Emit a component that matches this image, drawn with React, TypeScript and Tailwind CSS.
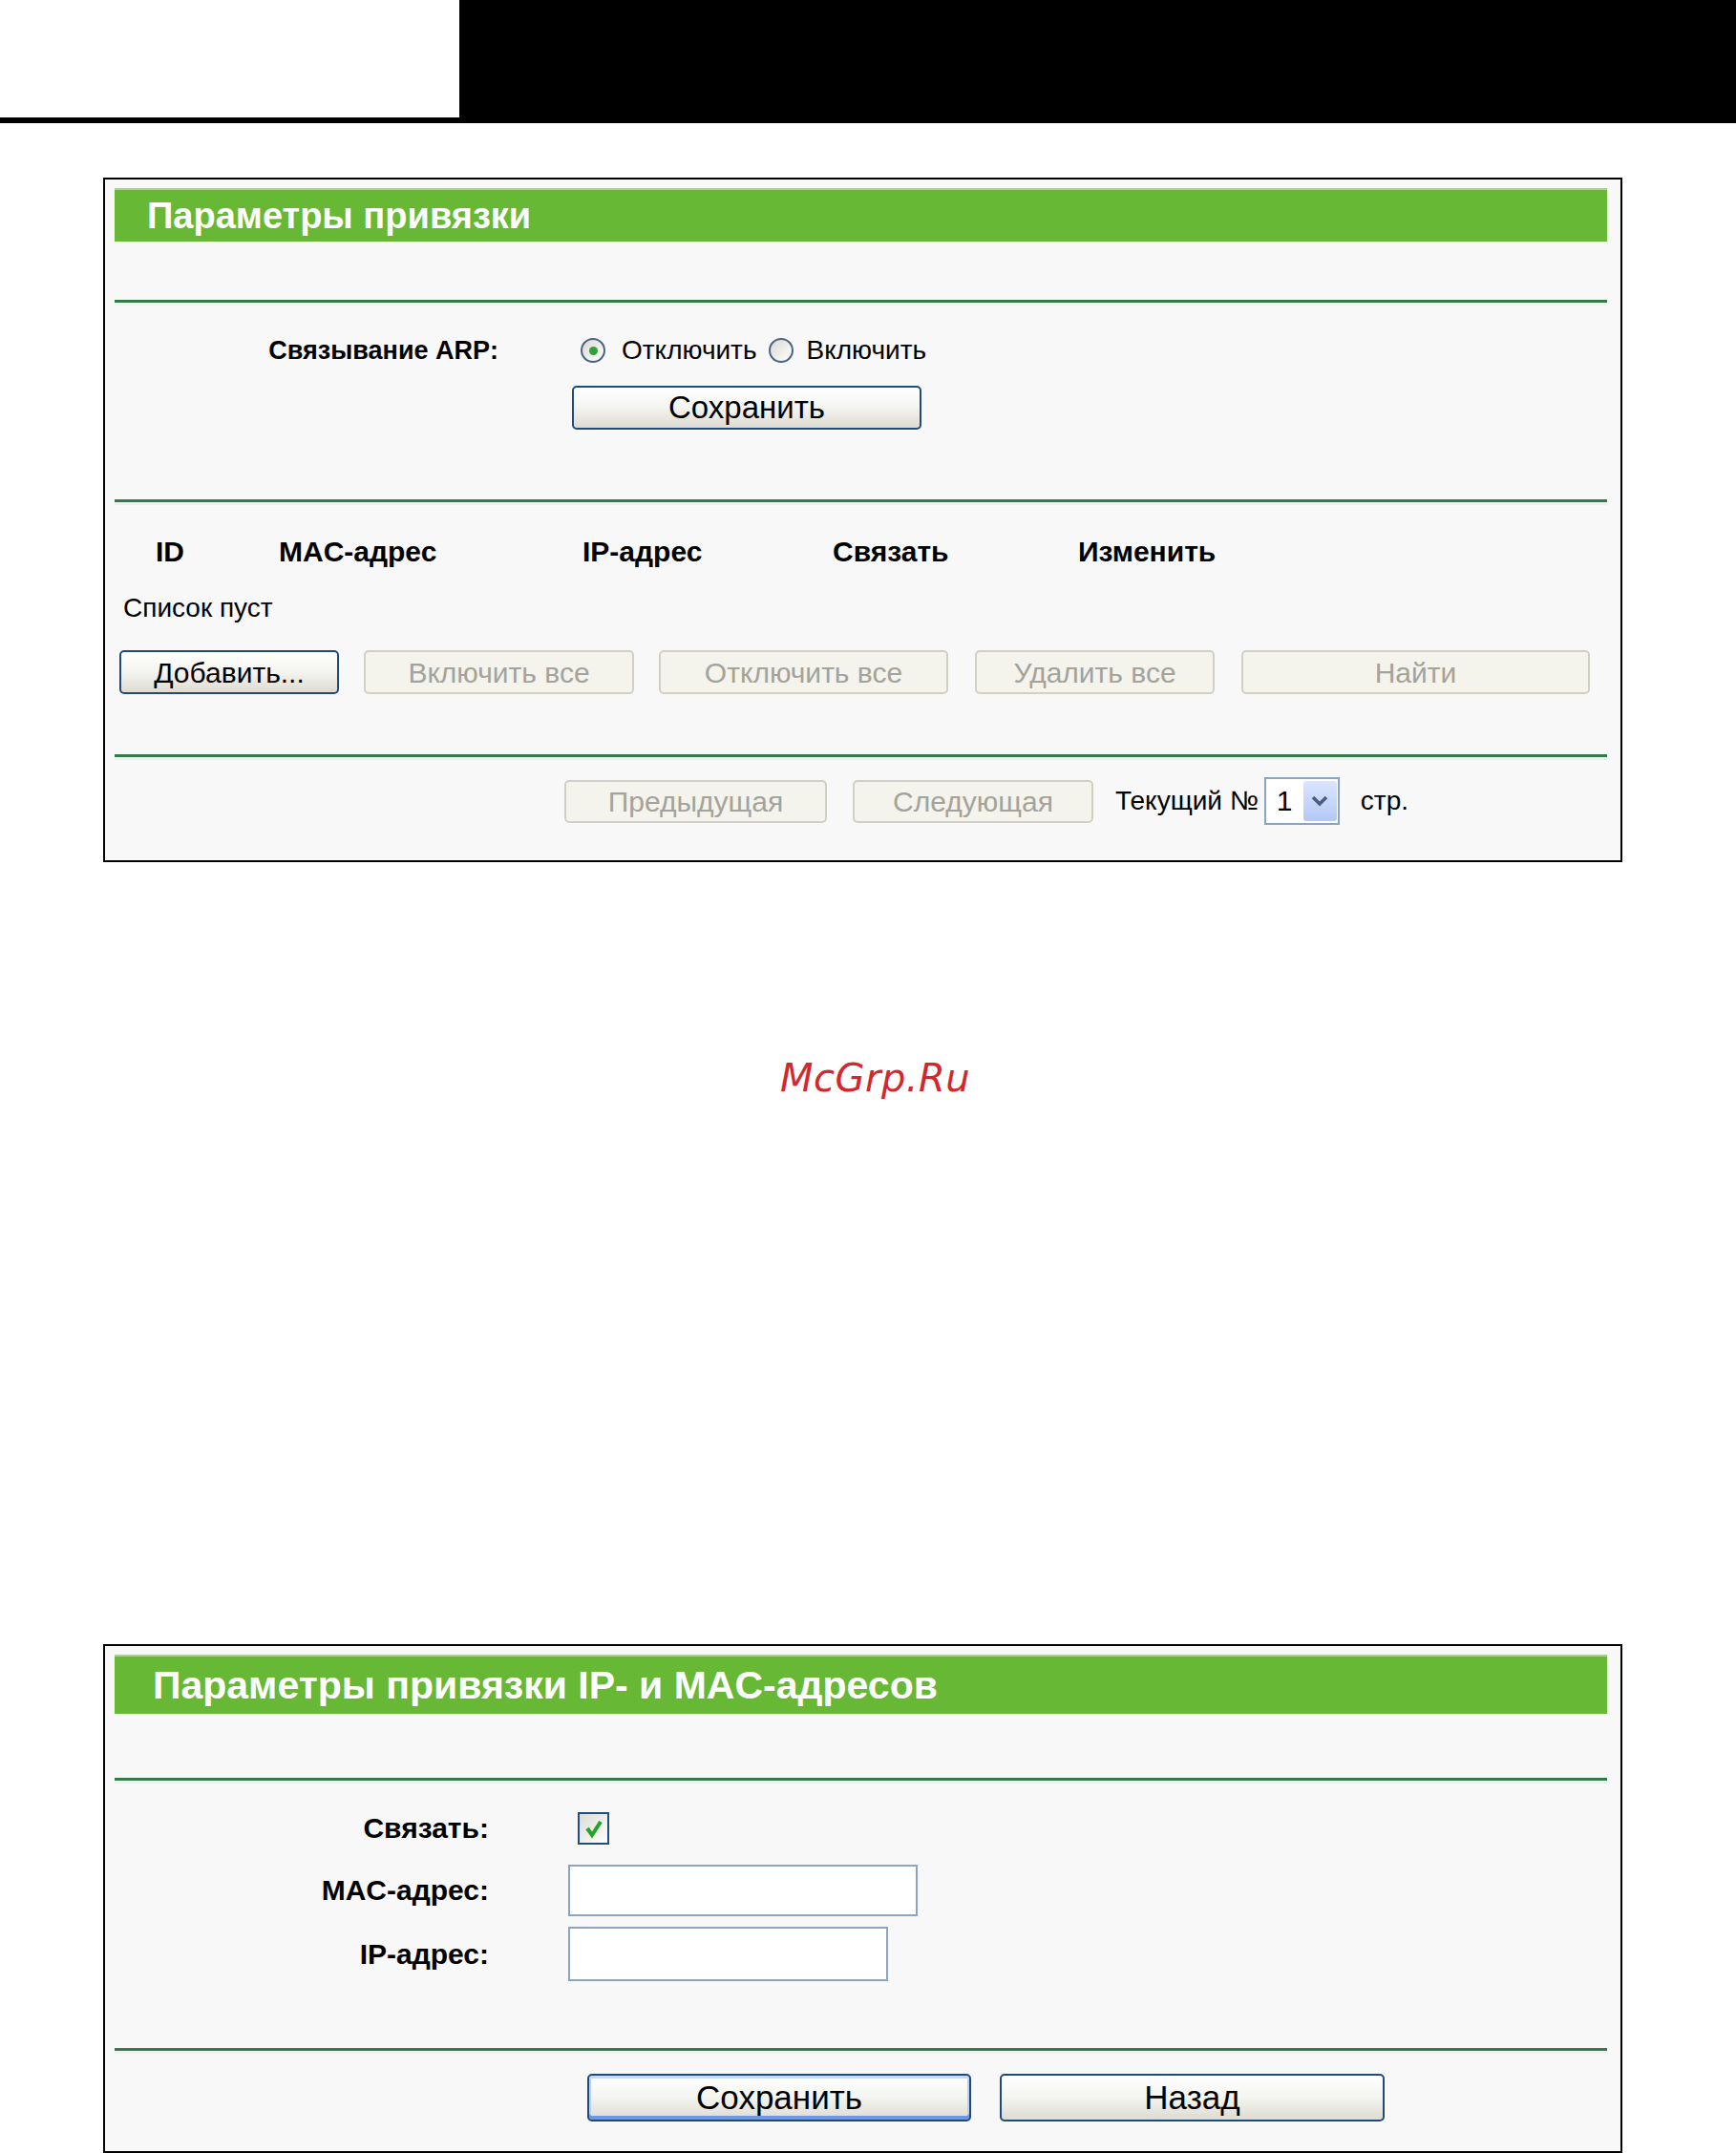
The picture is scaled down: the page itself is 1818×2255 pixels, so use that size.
import React from "react";

const Line = ({ mt }: { mt: string }) => (
  <div className={`${mt} h-[6px] w-full flex flex-col`}>
    <div className="h-[3px] w-full bg-[#33794a]" />
    <div className="h-[3px] w-full bg-[#eef2ee]" />
  </div>
);

const XPButton = ({
  children,
  className,
  focused,
}: {
  children: React.ReactNode;
  className: string;
  focused?: boolean;
}) => (
  <div
    className={`${className} box-border rounded-[5px] border-2 border-[#1f4b7c] flex items-center justify-center text-black bg-gradient-to-b from-[#ffffff] via-[#f4f4f0] to-[#dedbd0] ${
      focused ? "shadow-[inset_0_3px_0_#c6d9fa,inset_0_-4px_0_#6f97e2,inset_2px_0_0_#b9cff6,inset_-2px_0_0_#b9cff6]" : ""
    }`}
  >
    {children}
  </div>
);

const DisButton = ({ children, className }: { children: React.ReactNode; className: string }) => (
  <div
    className={`${className} box-border rounded-[5px] border-2 border-[#d2d0c4] bg-[#f4f3ec] flex items-center justify-center text-[#a3a39b]`}
  >
    {children}
  </div>
);

const Radio = ({ checked, className }: { checked?: boolean; className?: string }) => (
  <div
    className={`${className ?? ""} w-[26px] h-[26px] rounded-full border-2 border-[#4a6584] bg-gradient-to-br from-[#d9d9d3] to-[#ffffff] flex items-center justify-center shrink-0`}
  >
    {checked && <div className="w-[9px] h-[9px] rounded-full bg-[#2fa33a]" />}
  </div>
);

export default function App() {
  return (
    <div className="w-[1818px] h-[2255px] bg-white overflow-hidden font-['Liberation_Sans',Arial,sans-serif] text-black">
      {/* top bar */}
      <div className="h-[129px] w-full bg-black flex items-start">
        <div className="w-[481px] h-[123px] bg-white" />
      </div>

      {/* Panel 1 */}
      <div className="mt-[57px] ml-[108px] w-[1591px] h-[717px] box-border border-2 border-black bg-[#f8f8f8] pt-[9px] pl-[10px] pr-[14px] flex flex-col">
        <div className="h-[56px] bg-[#67b834] border-t-2 border-[#a5d882] flex items-center pl-[34px]">
          <span className="text-white font-bold text-[38px] leading-none">Параметры привязки</span>
        </div>

        <Line mt="mt-[61px]" />

        <div className="flex mt-[32px]">
          <div className="w-[402px] text-right font-bold text-[27px] leading-[30px] h-[30px]">Связывание ARP:</div>
          <div className="ml-[77px] flex flex-col">
            <div className="flex items-center h-[30px] text-[28px] leading-[30px]">
              <Radio checked className="ml-[9px]" />
              <span className="ml-[17px]">Отключить</span>
              <Radio className="ml-[12px]" />
              <span className="ml-[14px]">Включить</span>
            </div>
            <XPButton className="mt-[22px] w-[366px] h-[46px] text-[33px]">Сохранить</XPButton>
          </div>
        </div>

        <Line mt="mt-[73px]" />

        <div className="flex mt-[32px] pl-[43px] font-bold text-[30px] leading-[34px]">
          <div className="w-[129px]">ID</div>
          <div className="w-[318px]">MAC-адрес</div>
          <div className="w-[262px]">IP-адрес</div>
          <div className="w-[257px]">Связать</div>
          <div>Изменить</div>
        </div>

        <div className="mt-[26px] pl-[9px] text-[28px] leading-[32px]">Список пуст</div>

        <div className="flex mt-[28px] pl-[5px] text-[30px]">
          <XPButton className="w-[230px] h-[46px]">Добавить...</XPButton>
          <DisButton className="ml-[26px] w-[283px] h-[46px]">Включить все</DisButton>
          <DisButton className="ml-[26px] w-[303px] h-[46px]">Отключить все</DisButton>
          <DisButton className="ml-[28px] w-[251px] h-[46px]">Удалить все</DisButton>
          <DisButton className="ml-[28px] w-[365px] h-[46px]">Найти</DisButton>
        </div>

        <Line mt="mt-[63px]" />

        <div className="flex items-center mt-[18px] pl-[471px] h-[50px] text-[28px]">
          <DisButton className="w-[275px] h-[45px] text-[30px]">Предыдущая</DisButton>
          <DisButton className="ml-[27px] w-[252px] h-[45px] text-[30px]">Следующая</DisButton>
          <span className="ml-[23px]">Текущий №</span>
          <div className="ml-[6px] w-[79px] h-[50px] box-border border-2 border-[#8aa5c4] bg-white flex items-center">
            <span className="ml-[11px] text-[30px] leading-none">1</span>
            <div className="ml-[11px] w-[35px] h-[42px] rounded-[3px] bg-gradient-to-b from-[#dbe6fd] to-[#b3c8f6] flex items-center justify-center">
              <svg width="20" height="14" viewBox="0 0 20 14">
                <path d="M3 3 L10 10 L17 3" fill="none" stroke="#4d5f80" strokeWidth="3.6" />
              </svg>
            </div>
          </div>
          <span className="ml-[22px]">стр.</span>
        </div>
      </div>

      {/* watermark */}
      <div className="mt-[202px] ml-[817px] h-[48px] text-[40px] leading-[48px] italic text-[#d4272d] font-['DejaVu_Sans',sans-serif] tracking-[0.5px]">
        McGrp.Ru
      </div>

      {/* Panel 2 */}
      <div className="mt-[569px] ml-[108px] w-[1591px] h-[533px] box-border border-2 border-black bg-[#f8f8f8] pt-[9px] pl-[10px] pr-[14px] flex flex-col">
        <div className="h-[62px] bg-[#67b834] border-t-2 border-[#a5d882] flex items-center pl-[40px]">
          <span className="text-white font-bold text-[41px] leading-none">Параметры привязки IP- и MAC-адресов</span>
        </div>

        <Line mt="mt-[67px]" />

        <div className="flex items-center mt-[30px] h-[34px]">
          <div className="w-[392px] text-right font-bold text-[30px] leading-[34px]">Связать:</div>
          <div className="ml-[93px] w-[33px] h-[34px] box-border border-2 border-[#1f4f80] bg-gradient-to-br from-[#dcdcd6] to-[#ffffff] flex items-center justify-center">
            <svg width="24" height="24" viewBox="0 0 24 24">
              <path d="M5 12 L10 19 L19 5" fill="none" stroke="#22a32a" strokeWidth="4" />
            </svg>
          </div>
        </div>

        <div className="flex items-center mt-[21px] h-[54px]">
          <div className="w-[392px] text-right font-bold text-[30px] leading-[34px]">MAC-адрес:</div>
          <div className="ml-[83px] w-[366px] h-[54px] box-border border-2 border-[#8aa5c4] bg-white" />
        </div>

        <div className="flex items-center mt-[11px] h-[57px]">
          <div className="w-[392px] text-right font-bold text-[30px] leading-[34px]">IP-адрес:</div>
          <div className="ml-[83px] w-[335px] h-[57px] box-border border-2 border-[#8aa5c4] bg-white" />
        </div>

        <Line mt="mt-[70px]" />

        <div className="flex mt-[21px] pl-[495px] text-[35px]">
          <XPButton focused className="w-[402px] h-[50px]">Сохранить</XPButton>
          <XPButton className="ml-[30px] w-[403px] h-[50px]">Назад</XPButton>
        </div>
      </div>
    </div>
  );
}
